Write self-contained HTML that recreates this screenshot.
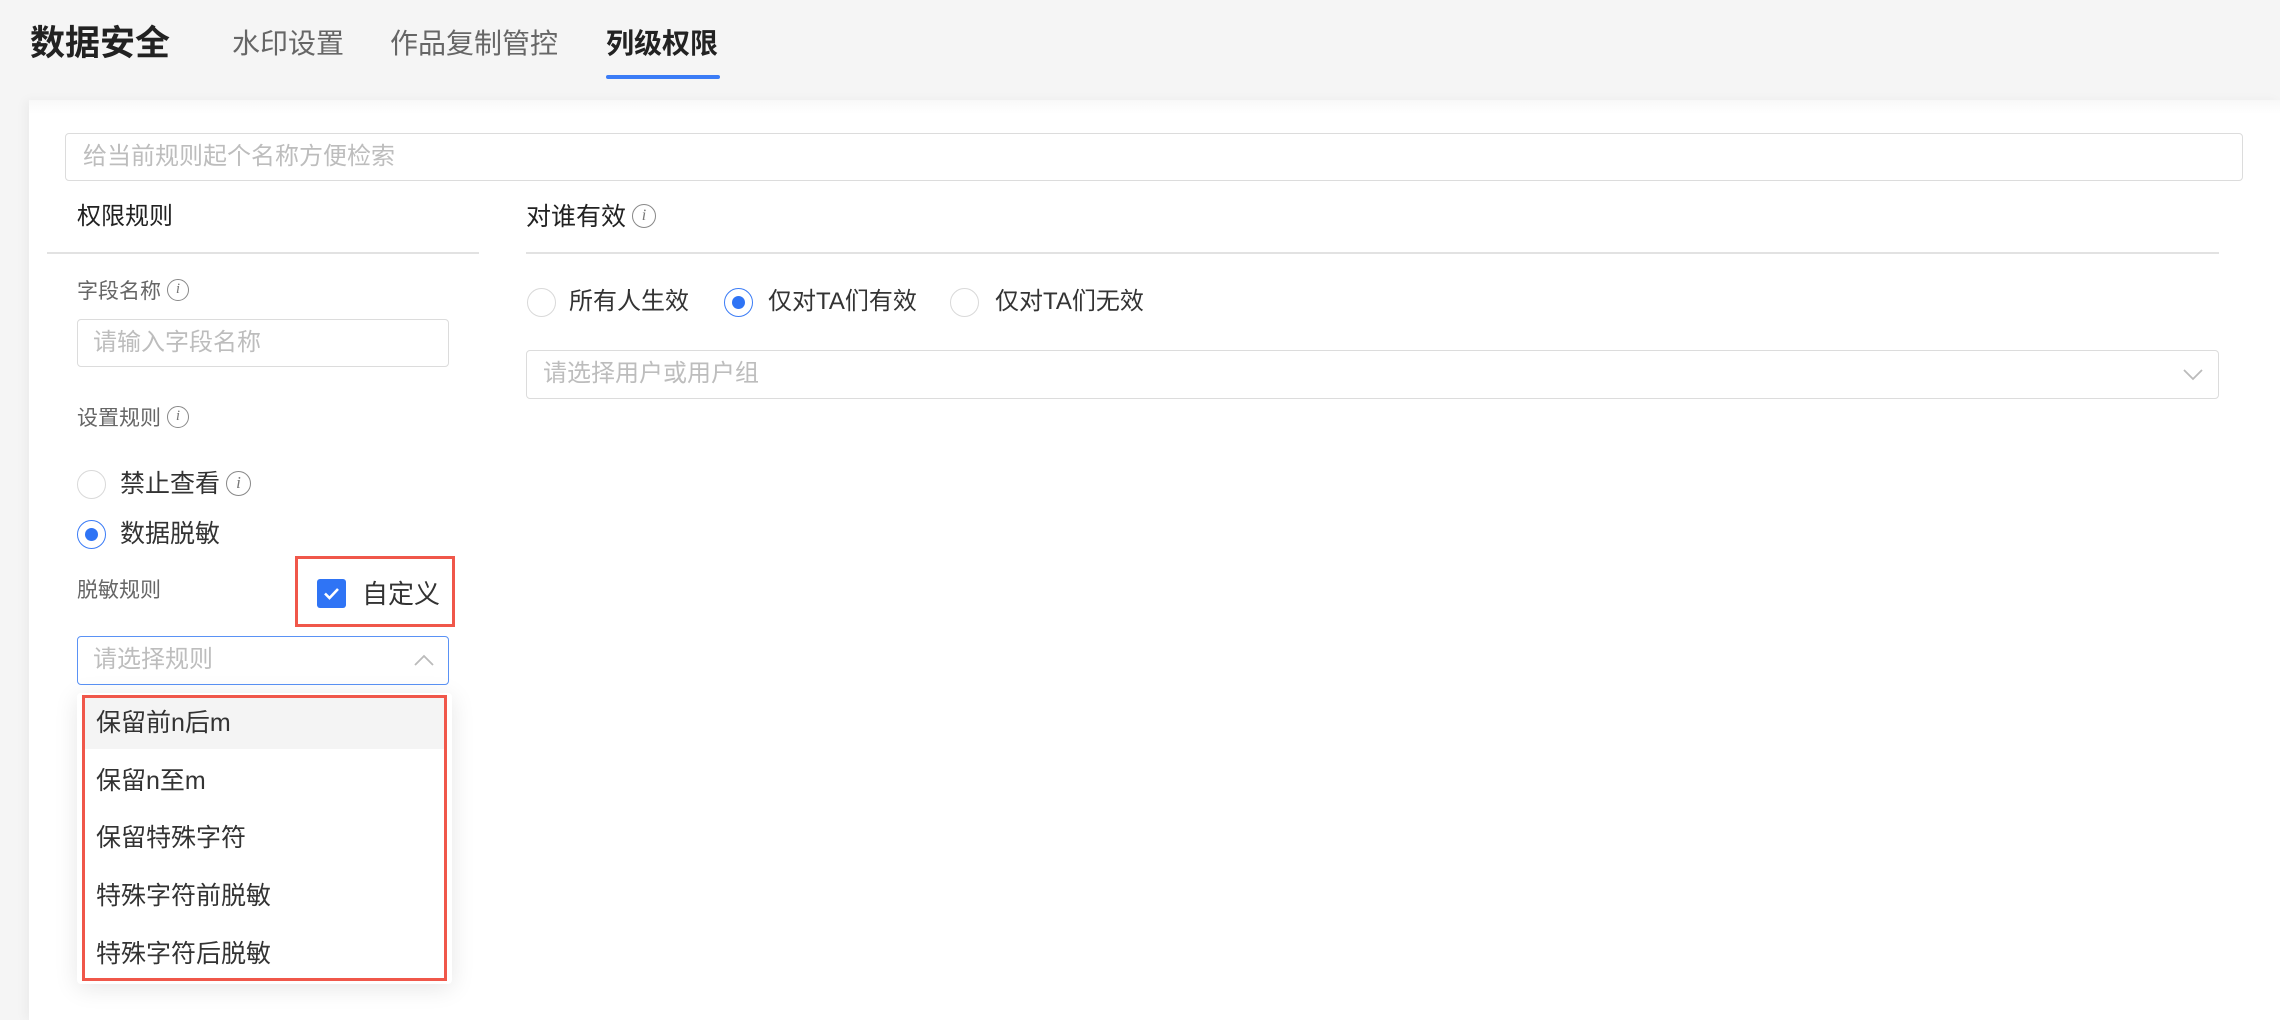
<!DOCTYPE html>
<html><head><meta charset="utf-8"><style>
*{margin:0;padding:0;box-sizing:border-box}
body{width:2280px;height:1020px;background:#f5f5f5;font-family:"Liberation Sans","Noto Sans CJK SC",sans-serif;position:relative;overflow:hidden;color:#333}
.a{position:absolute;white-space:nowrap}
.card{position:absolute;left:29px;top:100px;right:0;bottom:0;background:#fff;box-shadow:-4px 0 10px rgba(0,0,0,0.04)}
.card:before{content:"";position:absolute;left:0;right:0;top:0;height:14px;background:linear-gradient(#f8f8f8,#fff)}
.box{position:absolute;border:1.5px solid #dcdcdc;border-radius:4px;background:#fff}
.ph{color:#bdbdbd;font-size:24px}
.radio{position:absolute;width:29px;height:29px;border:1.5px solid #d9d9d9;border-radius:50%;background:#fff}
.radio.on{border-color:#3b7cf6}
.radio.on:after{content:"";position:absolute;left:6.5px;top:6.5px;width:13px;height:13px;border-radius:50%;background:#2f74f5}
.info{display:inline-block;width:22px;height:22px;border:1.5px solid #888;border-radius:50%;font-size:15px;line-height:19px;text-align:center;color:#777;font-style:italic;font-family:"Liberation Serif",serif;vertical-align:middle;margin-left:6px;position:relative;top:-2px}
.lbl{font-size:21px;color:#666}
.item{position:absolute;left:0;right:0;height:51px;line-height:51px;padding-left:11px;font-size:25px;color:#333}
</style></head><body>
<div class="a" style="left:30px;top:22px;font-size:35px;font-weight:bold;color:#222;line-height:44px">数据安全</div>
<div class="a" style="left:232px;top:26px;font-size:28px;color:#666;line-height:36px">水印设置</div>
<div class="a" style="left:390px;top:26px;font-size:28px;color:#666;line-height:36px">作品复制管控</div>
<div class="a" style="left:606px;top:26px;font-size:28px;color:#222;font-weight:bold;line-height:36px">列级权限</div>
<div class="a" style="left:606px;top:75px;width:114px;height:4px;border-radius:2px;background:#3b7cf6"></div>

<div class="card"></div>
<div class="box" style="left:65px;top:133px;width:2178px;height:48px"></div>
<div class="a ph" style="left:83px;top:140px;line-height:34px">给当前规则起个名称方便检索</div>

<div class="a" style="left:77px;top:200px;font-size:24px;color:#222;line-height:34px">权限规则</div>
<div class="a" style="left:526px;top:200px;font-size:25px;color:#222;line-height:34px">对谁有效<span class="info" style="width:24px;height:24px;line-height:21px;font-size:16px">i</span></div>
<div class="a" style="left:47px;top:252px;width:432px;height:1.5px;background:#e2e2e2"></div>
<div class="a" style="left:526px;top:252px;width:1693px;height:1.5px;background:#e2e2e2"></div>

<div class="a lbl" style="left:77px;top:278px;line-height:28px">字段名称<span class="info">i</span></div>
<div class="box" style="left:77px;top:319px;width:372px;height:48px"></div>
<div class="a ph" style="left:93px;top:326px;line-height:34px">请输入字段名称</div>
<div class="a lbl" style="left:77px;top:405px;line-height:28px">设置规则<span class="info">i</span></div>

<div class="radio" style="left:77px;top:470px"></div>
<div class="a" style="left:120px;top:467px;font-size:25px;line-height:35px">禁止查看<span class="info" style="width:25px;height:25px;line-height:22px;font-size:17px">i</span></div>
<div class="radio on" style="left:77px;top:520px"></div>
<div class="a" style="left:120px;top:517px;font-size:25px;line-height:35px">数据脱敏</div>
<div class="a lbl" style="left:77px;top:577px;line-height:28px">脱敏规则</div>
<div class="a" style="left:295px;top:556px;width:160px;height:71px;border:3px solid #f0574a"></div>
<div class="a" style="left:317px;top:579px;width:29px;height:29px;border-radius:3px;background:#2f74f5">
<svg width="29" height="29" viewBox="0 0 29 29"><path d="M8 14.5l4.5 4.5 8.5-9" stroke="#fff" stroke-width="2.6" fill="none"/></svg></div>
<div class="a" style="left:362px;top:576px;font-size:26px;line-height:36px">自定义</div>

<div class="box" style="left:77px;top:636px;width:372px;height:49px;border-color:#5a92f5"></div>
<div class="a ph" style="left:93px;top:643px;line-height:34px">请选择规则</div>
<svg class="a" style="left:413px;top:653px" width="22" height="14" viewBox="0 0 22 14"><path d="M2 12L11 3l9 9" stroke="#bbb" stroke-width="1.8" fill="none"/></svg>

<div class="a" style="left:77px;top:693px;width:375px;height:291px;background:#fff;border-radius:4px;box-shadow:0 4px 24px rgba(0,0,0,0.1)">
<div class="a" style="left:5px;top:2px;width:365px;height:286px;border:3px solid #f0574a;overflow:hidden">
<div class="item" style="top:0;background:#f4f4f4">保留前n后m</div>
<div class="item" style="top:58px">保留n至m</div>
<div class="item" style="top:115px">保留特殊字符</div>
<div class="item" style="top:173px">特殊字符前脱敏</div>
<div class="item" style="top:231px">特殊字符后脱敏</div>
</div></div>

<div class="radio" style="left:527px;top:288px"></div>
<div class="a" style="left:569px;top:285px;font-size:24px;line-height:34px">所有人生效</div>
<div class="radio on" style="left:724px;top:288px"></div>
<div class="a" style="left:768px;top:285px;font-size:24px;line-height:34px">仅对TA们有效</div>
<div class="radio" style="left:950px;top:288px"></div>
<div class="a" style="left:995px;top:285px;font-size:24px;line-height:34px">仅对TA们无效</div>

<div class="box" style="left:526px;top:350px;width:1693px;height:49px"></div>
<div class="a ph" style="left:543px;top:357px;line-height:34px">请选择用户或用户组</div>
<svg class="a" style="left:2183px;top:368px" width="20" height="14" viewBox="0 0 20 14"><path d="M1 2l9 9 9-9" stroke="#bbb" stroke-width="1.8" fill="none"/></svg>
</body></html>
